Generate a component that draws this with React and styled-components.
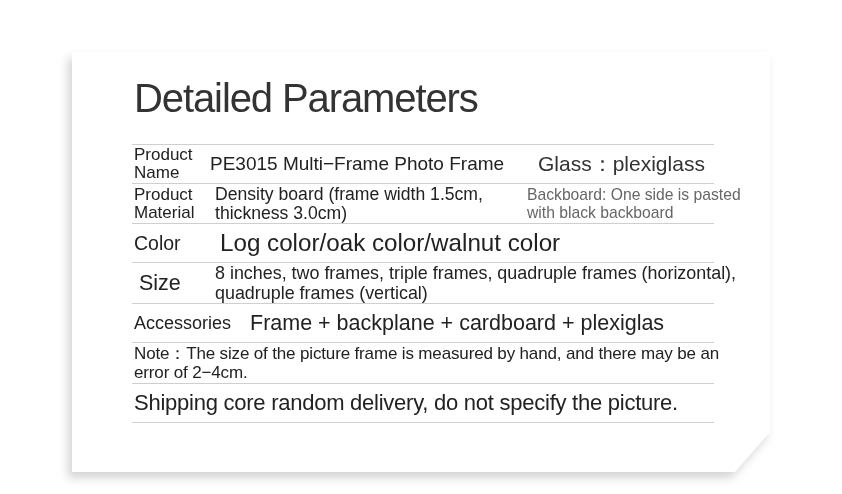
import React from 'react';
import styled, { createGlobalStyle } from 'styled-components';

const GlobalStyle = createGlobalStyle`
  html, body {
    margin: 0;
    background: #fff;
  }
  body {
    font-family: "Liberation Sans", Arial, sans-serif;
    color: #222;
  }
`;

const Page = styled.div`
  width: 842px;
  height: 494px;
  padding: 52px 0 0 72px;
  box-sizing: border-box;
  overflow: hidden;
`;

const Shadow = styled.div`
  width: 698px;
  height: 420px;
  filter: drop-shadow(-4px 6px 5px rgba(0, 0, 0, 0.17));
`;

const Card = styled.div`
  width: 100%;
  height: 100%;
  background: #fff;
  box-sizing: border-box;
  padding: 22px 0 0 60px;
  clip-path: polygon(0 0, 100% 0, 100% 380px, 663px 100%, 0 100%);
`;

const Title = styled.h1`
  margin: 0 0 22px 2px;
  font-size: 40px;
  font-weight: normal;
  color: #333;
  letter-spacing: -1.1px;
  line-height: 48px;
`;

const Table = styled.div`
  width: 582px;
  border-top: 1px solid #cfcfcf;
`;

const Row = styled.div`
  display: flex;
  align-items: center;
  height: ${(p) => p.h}px;
  border-bottom: 1px solid #cfcfcf;
  box-sizing: border-box;
  padding-left: 2px;
`;

const Label = styled.div`
  flex: none;
  width: ${(p) => p.w}px;
  padding-left: ${(p) => p.indent || 0}px;
  box-sizing: border-box;
  font-size: ${(p) => p.size}px;
  line-height: ${(p) => p.lh || 18}px;
  color: #222;
`;

const Value = styled.div`
  flex: none;
  width: ${(p) => (p.w ? `${p.w}px` : 'auto')};
  font-size: ${(p) => p.size}px;
  line-height: ${(p) => p.lh || 19}px;
  color: ${(p) => p.color || '#222'};
  white-space: pre;
`;

const Narrow = styled.div`
  font-size: ${(p) => p.size}px;
  line-height: ${(p) => p.lh}px;
  color: #222;
  letter-spacing: ${(p) => p.ls}px;
  white-space: pre;
`;

export default function App() {
  return (
    <>
      <GlobalStyle />
      <Page>
        <Shadow>
          <Card>
            <Title>Detailed Parameters</Title>
            <Table>
              <Row h={39}>
                <Label w={76} size={17}>{'Product\nName'}</Label>
                <Value w={328} size={19} lh={22}>PE3015 Multi−Frame Photo Frame</Value>
                <Value size={21} lh={24} color="#333">Glass：plexiglass</Value>
              </Row>
              <Row h={40}>
                <Label w={81} size={17}>{'Product\nMaterial'}</Label>
                <Value w={312} size={17.6}>{'Density board (frame width 1.5cm,\nthickness 3.0cm)'}</Value>
                <Value size={15.7} lh={18} color="#666">{'Backboard: One side is pasted\nwith black backboard'}</Value>
              </Row>
              <Row h={39}>
                <Label w={86} size={19.5} lh={22}>Color</Label>
                <Value size={24.2} lh={26}>Log color/oak color/walnut color</Value>
              </Row>
              <Row h={41}>
                <Label w={81} size={21.5} lh={24} indent={5}>Size</Label>
                <Value size={17.9} lh={20}>{'8 inches, two frames, triple frames, quadruple frames (horizontal),\nquadruple frames (vertical)'}</Value>
              </Row>
              <Row h={39}>
                <Label w={116} size={18} lh={20}>Accessories</Label>
                <Value size={21.5} lh={24}>Frame + backplane + cardboard + plexiglas</Value>
              </Row>
              <Row h={41}>
                <Narrow size={17} lh={19} ls={-0.15}>{'Note：The size of the picture frame is measured by hand, and there may be an\nerror of 2−4cm.'}</Narrow>
              </Row>
              <Row h={39}>
                <Narrow size={22} lh={24} ls={-0.25}>Shipping core random delivery, do not specify the picture.</Narrow>
              </Row>
            </Table>
          </Card>
        </Shadow>
      </Page>
    </>
  );
}
